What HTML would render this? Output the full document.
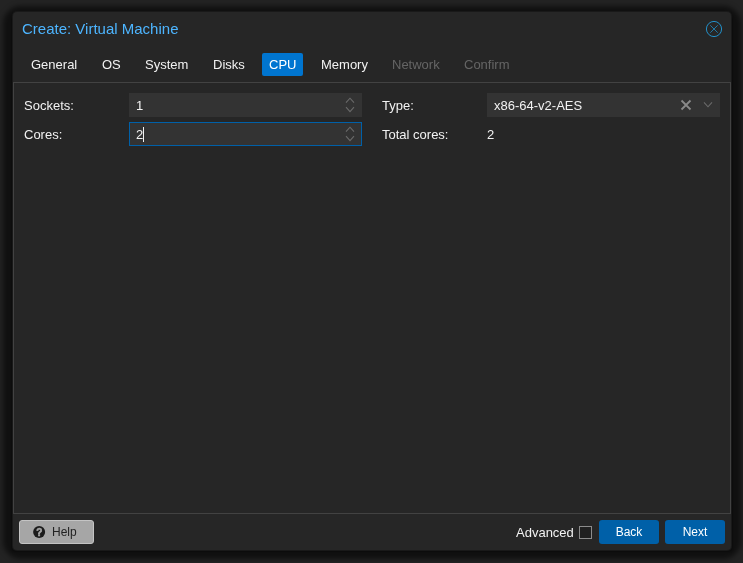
<!DOCTYPE html>
<html>
<head>
<meta charset="utf-8">
<title>Create: Virtual Machine</title>
<style>
*{box-sizing:border-box;margin:0;padding:0}
html,body{width:743px;height:563px;overflow:hidden;background:#232323;font-family:"Liberation Sans",Arial,sans-serif;font-size:13px;color:#f2f2f2}
.abs{position:absolute}
#win{will-change:transform;position:absolute;left:13px;top:12px;width:718px;height:538px;background:#262626;border-radius:4px}
#shadow{position:absolute;left:12px;top:15px;width:720px;height:535px;border-radius:9px;box-shadow:0 0 5px 9px rgba(0,0,0,.54)}
#shadowT{position:absolute;left:12px;top:16px;width:720px;height:535px;border-radius:4px;box-shadow:0 0 2px rgba(0,0,0,.9)}
#ring{position:absolute;left:12px;top:11px;width:720px;height:540px;border-radius:5px;background:#191919}
#title{position:absolute;left:9px;top:8px;font-size:15px;line-height:18px;color:#4db5ff;white-space:nowrap}
#close{position:absolute;left:692px;top:8px;width:18px;height:18px}
.tab{position:absolute;top:41px;height:23px;line-height:23px;font-size:13px;padding:0 7px;color:#f2f2f2;border-radius:3px;white-space:nowrap}
.tab.active{background:#0075d0;border-radius:2px;color:#fff}
.tab.dis{color:#656565}
#body{position:absolute;left:0;top:70px;width:718px;height:432px;border:1px solid #424242;background:#262626}
.lbl{position:absolute;font-size:13px;line-height:24px;height:24px;padding-top:1px;white-space:nowrap;color:#f2f2f2}
.inp{position:absolute;height:24px;background:#333;border:1px solid #333;font-size:13px;line-height:22px;padding-left:6px;padding-top:1px;color:#f2f2f2;white-space:nowrap}
.inp.focus{border-color:#0060a8}
.btn{position:absolute;top:508px;height:24px;border-radius:3px;font-size:12px;line-height:24px;text-align:center;color:#fff;background:#0060a8;white-space:nowrap}
#help{left:6px;width:75px;background:#a6a6a6;color:#222;border:1px solid #c4c4c4;line-height:22px}
</style>
</head>
<body>
<div id="shadow"></div><div id="shadowT"></div><div id="ring"></div>
<div id="win">
  <div id="title">Create: Virtual Machine</div>
  <svg id="close" viewBox="0 0 18 18"><circle cx="9" cy="9" r="7.6" fill="none" stroke="#2390c8" stroke-width="1"/><path d="M5.3 5.3 L12.7 12.7 M12.7 5.3 L5.3 12.7" stroke="#2088bd" stroke-width="0.85" fill="none"/></svg>

  <div class="tab" style="left:11px">General</div>
  <div class="tab" style="left:82px">OS</div>
  <div class="tab" style="left:125px">System</div>
  <div class="tab" style="left:193px">Disks</div>
  <div class="tab active" style="left:249px">CPU</div>
  <div class="tab" style="left:301px">Memory</div>
  <div class="tab dis" style="left:372px">Network</div>
  <div class="tab dis" style="left:444px">Confirm</div>

  <div id="body"></div>

  <div class="lbl" style="left:11px;top:81px">Sockets:</div>
  <div class="inp" style="left:116px;top:81px;width:233px">1</div>
  <svg class="abs" style="left:331px;top:84px" width="12" height="18" viewBox="0 0 12 18"><path d="M2 6.6 L6 2.2 L10 6.6 M2 11.2 L6 15.6 L10 11.2" fill="none" stroke="#6a6a6a" stroke-width="1.1"/></svg>

  <div class="lbl" style="left:11px;top:110px">Cores:</div>
  <div class="inp focus" style="left:116px;top:110px;width:233px">2<span style="display:inline-block;width:1px;height:15px;background:#f2f2f2;vertical-align:-3px"></span></div>
  <svg class="abs" style="left:331px;top:113px" width="12" height="18" viewBox="0 0 12 18"><path d="M2 6.6 L6 2.2 L10 6.6 M2 11.2 L6 15.6 L10 11.2" fill="none" stroke="#6a6a6a" stroke-width="1.1"/></svg>

  <div class="lbl" style="left:369px;top:81px">Type:</div>
  <div class="inp" style="left:474px;top:81px;width:233px">x86-64-v2-AES</div>
  <svg class="abs" style="left:667px;top:87px" width="12" height="12" viewBox="0 0 12 12"><path d="M1.5 1.5 L10.5 10.5 M10.5 1.5 L1.5 10.5" fill="none" stroke="#8a8a8a" stroke-width="1.8"/></svg>
  <svg class="abs" style="left:690px;top:90px" width="10" height="7" viewBox="0 0 10 7"><path d="M1 0.4 L5 4.8 L9 0.4" fill="none" stroke="#6a6a6a" stroke-width="1.1"/></svg>

  <div class="lbl" style="left:369px;top:110px">Total cores:</div>
  <div class="lbl" style="left:474px;top:110px">2</div>

  <div class="btn" id="help"><svg style="position:absolute;left:13px;top:5px;overflow:visible" width="12" height="12" viewBox="0 0 12 12"><circle cx="6.15" cy="5.9" r="6" fill="#1c1c1c"/><text x="6.3" y="9.6" font-size="10" font-weight="bold" text-anchor="middle" fill="#a6a6a6" stroke="#a6a6a6" stroke-width="0.6" stroke-linejoin="round" font-family="Liberation Sans,sans-serif">?</text></svg><span style="position:absolute;left:32px;top:0">Help</span></div>
  <div class="lbl" style="left:503px;top:508px">Advanced</div>
  <div class="abs" style="left:566px;top:514px;width:13px;height:13px;border:1px solid #8c8c8c;background:#202020"></div>
  <div class="btn" style="left:586px;width:60px">Back</div>
  <div class="btn" style="left:652px;width:60px">Next</div>
</div>
</body>
</html>
